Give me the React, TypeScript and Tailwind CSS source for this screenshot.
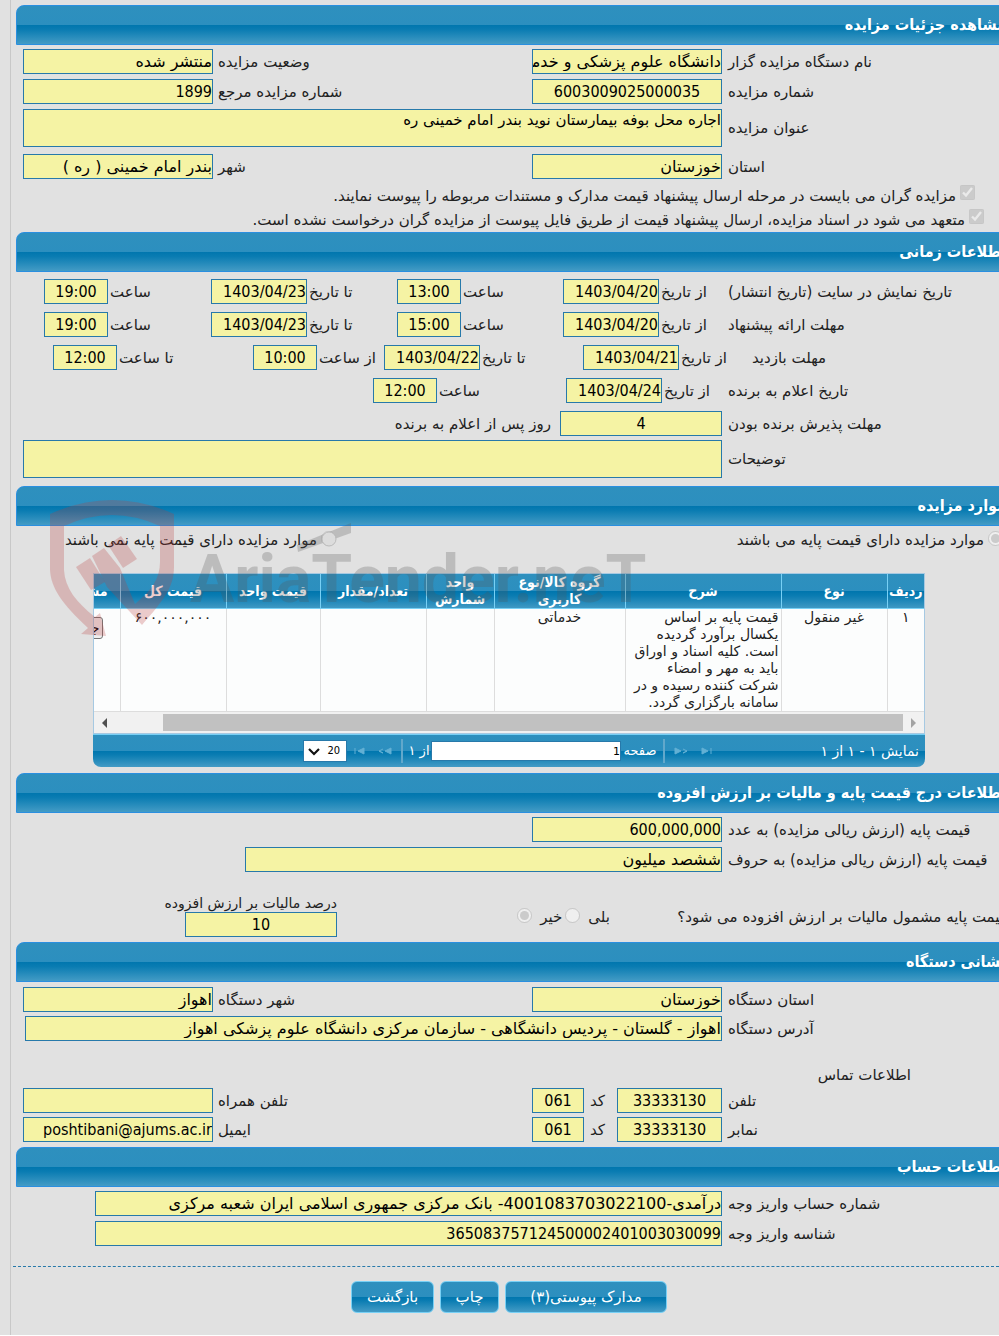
import { useId, type ReactNode } from 'react';
import { clsx } from 'clsx';

const glossy = 'bg-[linear-gradient(#2e90be_0%,#2c8fbf_50%,#0076ae_50%,#0a7cb2_62%,#439bc5_100%)]';
const box = 'shrink-0 border border-[#2779aa] bg-[#f5f3a4] text-base text-black outline-none';
const narrow = "font-['DejaVu_Sans_Condensed','DejaVu_Sans',sans-serif]";

type FieldProps = {
  label: string;
  value: string;
  labelClass?: string;
  className?: string;
  center?: boolean;
};

// label on the right, box on the left (the page is rtl)
function Field({ label, value, labelClass = 'w-[285px] pl-1.5', className = 'w-[190px]', center }: FieldProps) {
  const id = useId();
  const persian = /[\u0600-\u06ff]/.test(value);
  return (
    <>
      <label htmlFor={id} className={clsx('shrink-0 text-left whitespace-nowrap', labelClass)}>
        {label}
      </label>
      <input
        id={id}
        readOnly
        defaultValue={value}
        className={clsx(box, 'h-[25px]', className, center && 'text-center', !persian && narrow)}
      />
    </>
  );
}

function Area({ label, value }: { label: string; value: string }) {
  const id = useId();
  return (
    <div className="flex items-center">
      <label htmlFor={id} className="w-[285px] shrink-0 pl-1.5 text-left">
        {label}
      </label>
      <textarea
        id={id}
        readOnly
        defaultValue={value}
        className="h-[38px] min-w-0 flex-1 resize-none border border-[#2779aa] bg-[#f5f3a4] leading-5 text-black outline-none"
      />
    </div>
  );
}

function Section({ title, className, children }: { title: string; className?: string; children: ReactNode }) {
  return (
    <section>
      <h2
        className={clsx(
          'ml-[5px] flex h-10 items-center rounded-tl-lg border border-[#2a8fe0] text-base font-bold text-white',
          glossy,
          narrow
        )}
      >
        {title}
      </h2>
      <div className={clsx('flex flex-col pl-3', className)}>{children}</div>
    </section>
  );
}

function Check({ label, className }: { label: string; className?: string }) {
  return (
    <label className={clsx('flex h-6 items-center gap-1 whitespace-nowrap', className)}>
      <input type="checkbox" defaultChecked disabled className="mb-2 size-[15px]" />
      {label}
    </label>
  );
}

const restLabel = 'flex-1 pl-[5px]';

const columns = [
  { title: 'ردیف', width: 'w-[37px]' },
  { title: 'نوع', width: 'w-[106px]' },
  { title: 'شرح', width: 'w-[156px]' },
  { title: 'گروه کالا/نوع کاربری', width: 'w-[131px] px-3' },
  { title: 'واحد شمارش', width: 'w-[68px]' },
  { title: 'تعداد/مقدار', width: 'w-[106px]' },
  { title: 'قیمت واحد', width: 'w-[94px]' },
  { title: 'قیمت کل', width: 'w-[106px]' },
];

const row = [
  '۱',
  'غیر منقول',
  'قیمت پایه بر اساس یکسال برآورد گردیده است. کلیه اسناد و اوراق باید به مهر و امضاء شرکت کننده رسیده و در سامانه بارگزاری گردد.',
  'خدماتی',
  '',
  '',
  '',
  '۶۰۰,۰۰۰,۰۰۰',
];

function ItemsTable() {
  return (
    <div className="mr-[82px] ml-[70px] text-sm">
      <div className="overflow-hidden border border-[#a6c9e2] bg-[#fcfdfd]">
        <table className="w-[904px] table-fixed border-collapse leading-[17px] text-[#222]">
          <thead>
            <tr className={clsx('h-[34px] leading-[17px] text-white', glossy, narrow)}>
              {columns.map((c) => (
                <th key={c.title} className={clsx('overflow-hidden border-b border-l border-[#78d0f5] py-0', c.width)}>
                  {c.title}
                </th>
              ))}
              <th className="w-[100px] border-b border-[#78d0f5] p-0 pr-3 text-right">مشاهده</th>
            </tr>
          </thead>
          <tbody>
            <tr className="h-[103px] align-top">
              {row.map((text, i) => (
                <td
                  key={i}
                  className={clsx('border-b border-l border-[#ddd] p-0', i === 2 ? 'pr-0.5 text-right' : 'text-center')}
                >
                  {text}
                </td>
              ))}
              <td className="border-b border-[#ddd] p-0 pt-2 pr-[17px]">
                <button
                  type="button"
                  className="h-[22px] rounded-[3px] border border-[#767676] bg-[#efefef] px-0.5 text-black"
                >
                  جزئیات
                </button>
              </td>
            </tr>
          </tbody>
        </table>
        <div className="flex h-[21px] items-center bg-[#f1f1f1]">
          <svg className="w-[21px]" height="10" viewBox="0 0 21 10">
            <path d="M8 0 L13 5 L8 10 Z" fill="#a3a3a3" />
          </svg>
          <div className="h-[17px] flex-1 bg-[#c1c1c1]" />
          <svg className="mr-12 w-[21px]" height="10" viewBox="0 0 21 10">
            <path d="M13 0 L8 5 L13 10 Z" fill="#505050" />
          </svg>
        </div>
      </div>
      <Pager />
    </div>
  );
}

function PagerButton({ label, d }: { label: string; d: string }) {
  return (
    <button type="button" disabled aria-label={label} className="flex w-[25px] justify-center">
      <svg width="15" height="8" viewBox="0 0 15 8" fill="#62b0d4" stroke="#62b0d4">
        <path d={d} />
      </svg>
    </button>
  );
}

function Pager() {
  return (
    <div
      className={clsx(
        'grid h-[33px] grid-cols-[1fr_auto_1fr] items-center rounded-b-lg border-t border-[#78d0f5] text-white',
        glossy
      )}
    >
      <span className="pr-1.5">نمایش ۱ - ۱ از ۱</span>
      <div className="ml-1 flex items-center">
        <PagerButton label="اولین" d="M3 1 L9 4 L3 7 Z M12 1 V7" />
        <PagerButton label="قبلی" d="M1 1 L7 4 L1 7 Z M9 2 L13 4 L9 6 L13 4" />
        <span className="mx-1 h-6 w-0.5 bg-[#62a8cb]" />
        <label htmlFor="page" className="w-[38px] text-center text-[13px]">
          صفحه
        </label>
        <input
          id="page"
          defaultValue="1"
          className="h-5 w-[190px] border border-[#2779aa] bg-white text-[11px] text-black outline-none"
        />
        <span className="w-6 text-center text-[13px] whitespace-nowrap">از ۱</span>
        <span className="mx-1 h-6 w-0.5 bg-[#62a8cb]" />
        <PagerButton label="بعدی" d="M14 1 L8 4 L14 7 Z M6 2 L2 4 L6 6 L2 4" />
        <PagerButton label="آخرین" d="M12 1 L6 4 L12 7 Z M3 1 V7" />
        <div className="relative">
          <select
            aria-label="تعداد سطر"
            defaultValue="20"
            className={clsx(
              'block h-[22px] w-[44px] appearance-none border border-[#2779aa] bg-white pr-1.5 text-[11px] text-black',
              narrow
            )}
          >
            <option>20</option>
          </select>
          <svg className="pointer-events-none absolute top-2 left-[5px]" width="12" height="8" viewBox="0 0 12 8">
            <path d="M1 1 L6 6 L11 1" fill="none" stroke="#111" strokeWidth="2.2" />
          </svg>
        </div>
      </div>
    </div>
  );
}

function Watermark() {
  return (
    <svg
      aria-hidden
      className="pointer-events-none absolute top-3 left-[37px]"
      width="612"
      height="142"
      viewBox="48 498 612 142"
    >
      <g fill="#b93c3c" fillOpacity="0.26">
        <path d="M50 514 Q112 486 174 514 V567 C174 588 162 602 142 625 L107 587 L92 556 L104 548 L120 568 L135 604 C152 590 160 578 160 562 V526 Q112 504 64 526 V570 C65 588 76 602 95 617 L100 613 L106 636 L81 634 L88 628 C62 604 51 588 50 570 Z" />
        <path d="M76 567 L90 558 L105 582 L91 590 Z" />
        <path d="M108 545 L121 536 L137 559 L123 568 Z" />
      </g>
      <g fill="#555" fillOpacity="0.26">
        <text x="190" y="602" direction="ltr" fontFamily="Roboto, Liberation Sans, sans-serif" fontWeight="700" fontSize="66">
          AriaTender.neT
        </text>
        <path d="M297 545 L351 523 V533 L298 552 Z" />
      </g>
      <circle cx="329" cy="539" r="7" fill="#dcdcdc" stroke="#bbb" />
    </svg>
  );
}

function ActionButton({ children, className }: { children: ReactNode; className: string }) {
  return (
    <button type="button" className={clsx('h-8 rounded-md border border-[#78d0f5] text-white', glossy, className)}>
      {children}
    </button>
  );
}

export default function App() {
  return (
    <div
      dir="rtl"
      className="overflow-hidden bg-[#e1e1e1] font-['DejaVu_Sans',sans-serif] text-[15px] leading-5 text-[#222]"
    >
      <main className="-mr-2 ml-2.5 border-l border-[#c8c8c8] pt-[5px] pb-[22px]">
        <Section title="مشاهده جزئیات مزایده" className="gap-[5px] pt-1">
          <div className="flex items-center">
            <Field label="نام دستگاه مزایده گزار" value="دانشگاه علوم پزشکی و خدمات" />
            <Field label="وضعیت مزایده" value="منتشر شده" labelClass={restLabel} />
          </div>
          <div className="flex items-center">
            <Field label="شماره مزایده" value="6003009025000035" center />
            <Field label="شماره مزایده مرجع" value="1899" labelClass={restLabel} />
          </div>
          <Area label="عنوان مزایده" value="اجاره محل بوفه بیمارستان نوید بندر امام خمینی ره" />
          <div className="mt-0.5 flex items-center">
            <Field label="استان" value="خوزستان" />
            <Field label="شهر" value="بندر امام خمینی ( ره )" labelClass={restLabel} />
          </div>
          <div>
            <Check
              className="pr-8"
              label="مزایده گران می بایست در مرحله ارسال پیشنهاد قیمت مدارک و مستندات مربوطه را پیوست نمایند."
            />
            <Check
              className="pr-[23px]"
              label="متعهد می شود در اسناد مزایده، ارسال پیشنهاد قیمت از طریق فایل پیوست از مزایده گران درخواست نشده است."
            />
          </div>
        </Section>

        <Section title="اطلاعات زمانی" className="gap-2 pt-[7px] pb-2">
          <div className="flex items-center">
            <span className="w-[279px] text-left">تاریخ نمایش در سایت (تاریخ انتشار)</span>
            <Field label="از تاریخ" value="1403/04/20" labelClass="w-[69px] pl-0.5" className="w-24" />
            <Field label="ساعت" value="13:00" labelClass="w-[102px] pl-0.5" className="w-16" center />
            <Field label="تا تاریخ" value="1403/04/23" labelClass="w-[90px] pl-0.5" className="w-24" />
            <Field label="ساعت" value="19:00" labelClass="w-[103px] pl-0.5" className="w-16" center />
          </div>
          <div className="flex items-center">
            <span className="w-[279px] text-left">مهلت ارائه پیشنهاد</span>
            <Field label="از تاریخ" value="1403/04/20" labelClass="w-[69px] pl-0.5" className="w-24" />
            <Field label="ساعت" value="15:00" labelClass="w-[102px] pl-0.5" className="w-16" center />
            <Field label="تا تاریخ" value="1403/04/23" labelClass="w-[90px] pl-0.5" className="w-24" />
            <Field label="ساعت" value="19:00" labelClass="w-[103px] pl-0.5" className="w-16" center />
          </div>
          <div className="flex items-center">
            <span className="w-[255px] text-left">مهلت بازدید</span>
            <Field label="از تاریخ" value="1403/04/21" labelClass="w-[73px] pl-0.5" className="w-24" />
            <Field label="تا تاریخ" value="1403/04/22" labelClass="w-[103px] pl-0.5" className="w-24" />
            <Field label="از ساعت" value="10:00" labelClass="w-[67px] pl-0.5" className="w-16" center />
            <Field label="تا ساعت" value="12:00" labelClass="w-[136px] pl-0.5" className="w-16" center />
          </div>
          <div className="flex items-center">
            <span className="w-[279px] text-left">تاریخ اعلام به برنده</span>
            <Field label="از تاریخ" value="1403/04/24" labelClass="w-[66px] pl-0.5" className="w-24" />
            <Field label="ساعت" value="12:00" labelClass="w-[129px] pl-0.5" className="w-16" center />
          </div>
          <div className="flex items-center">
            <Field label="مهلت پذیرش برنده بودن" value="4" className="w-[162px]" center />
            <span className="pr-[9px]">روز پس از اعلام به برنده</span>
          </div>
          <div className="-mt-1">
            <Area label="توضیحات" value="" />
          </div>
        </Section>

        <div className="relative">
          <Section title="موارد مزایده" className="pb-1.5">
            <div className="mb-[19px] flex h-7 items-center">
              <label className="flex w-[671px] items-center gap-1 pr-1">
                <input type="radio" name="items" defaultChecked disabled className="mb-1 size-[15px]" />
                موارد مزایده دارای قیمت پایه می باشند
              </label>
              <label className="flex items-center gap-1">
                <input type="radio" name="items" disabled className="mb-1 size-[15px]" />
                موارد مزایده دارای قیمت پایه نمی باشند
              </label>
            </div>
            <ItemsTable />
          </Section>
          <Watermark />
        </div>

        <Section title="اطلاعات درج قیمت پایه و مالیات بر ارزش افزوده" className="gap-[5px] pt-1 pb-[5px]">
          <div className="flex items-center">
            <Field label="قیمت پایه (ارزش ریالی مزایده) به عدد" value="600,000,000" />
          </div>
          <div className="flex items-center">
            <Field label="قیمت پایه (ارزش ریالی مزایده) به حروف" value="ششصد میلیون" className="w-[477px]" />
          </div>
          <div className="mt-[18px] flex">
            <span className="mt-3 w-[322px] pl-2 text-left whitespace-nowrap">
              قیمت پایه مشمول مالیات بر ارزش افزوده می شود؟
            </span>
            <div className="mt-3 flex h-5 flex-1 items-center pr-[75px]">
              <label className="flex items-center gap-2">
                بلی
                <input type="radio" name="vat" disabled className="mb-1 size-[15px]" />
              </label>
              <label className="flex items-center gap-2 pr-[3px]">
                خیر
                <input type="radio" name="vat" defaultChecked disabled className="mb-1 size-[15px]" />
              </label>
            </div>
            <div className="ml-[146px] flex w-[168px] flex-col">
              <label htmlFor="vat-percent" className="h-[17px] text-sm leading-[17px] whitespace-nowrap">
                درصد مالیات بر ارزش افزوده
              </label>
              <input
                id="vat-percent"
                readOnly
                defaultValue="10"
                className={clsx(box, narrow, 'h-[25px] w-[152px] text-center')}
              />
            </div>
          </div>
        </Section>

        <Section title="نشانی دستگاه" className="gap-1 pt-[5px] pb-[5px]">
          <div className="flex items-center">
            <Field label="استان دستگاه" value="خوزستان" />
            <Field label="شهر دستگاه" value="اهواز" labelClass={restLabel} />
          </div>
          <div className="flex items-center">
            <Field
              label="آدرس دستگاه"
              value="اهواز - گلستان - پردیس دانشگاهی - سازمان مرکزی دانشگاه علوم پزشکی اهواز"
              className="w-[697px]"
            />
          </div>
          <h3 className="mt-5 h-[19px] pr-24">اطلاعات تماس</h3>
          <div className="flex items-center">
            <Field label="تلفن" value="33333130" className="w-[105px]" center />
            <Field label="کد" value="061" labelClass="w-[33px] pl-1.5" className="w-[52px]" center />
            <Field label="تلفن همراه" value="" labelClass={restLabel} />
          </div>
          <div className="flex items-center">
            <Field label="نمابر" value="33333130" className="w-[105px]" center />
            <Field label="کد" value="061" labelClass="w-[33px] pl-1.5" className="w-[52px]" center />
            <Field label="ایمیل" value="poshtibani@ajums.ac.ir" labelClass={restLabel} />
          </div>
        </Section>

        <Section title="اطلاعات حساب" className="gap-[5px] pt-1">
          <div className="flex items-center">
            <Field
              label="شماره حساب واریز وجه"
              value="درآمدی-4001083703022100- بانک مرکزی جمهوری اسلامی ایران شعبه مرکزی"
              className="w-[627px]"
            />
          </div>
          <div className="flex items-center">
            <Field label="شناسه واریز وجه" value="365083757124500002401003030099" className="w-[627px]" />
          </div>
        </Section>

        <div className="mt-5 mr-2 ml-0.5 border-t border-dashed border-[#2779aa]" />
        <div className="mt-3.5 flex justify-center gap-1.5">
          <ActionButton className="w-[162px]">مدارک پیوستی(۳)</ActionButton>
          <ActionButton className="w-[59px]">چاپ</ActionButton>
          <ActionButton className="w-[83px]">بازگشت</ActionButton>
        </div>
      </main>
    </div>
  );
}
